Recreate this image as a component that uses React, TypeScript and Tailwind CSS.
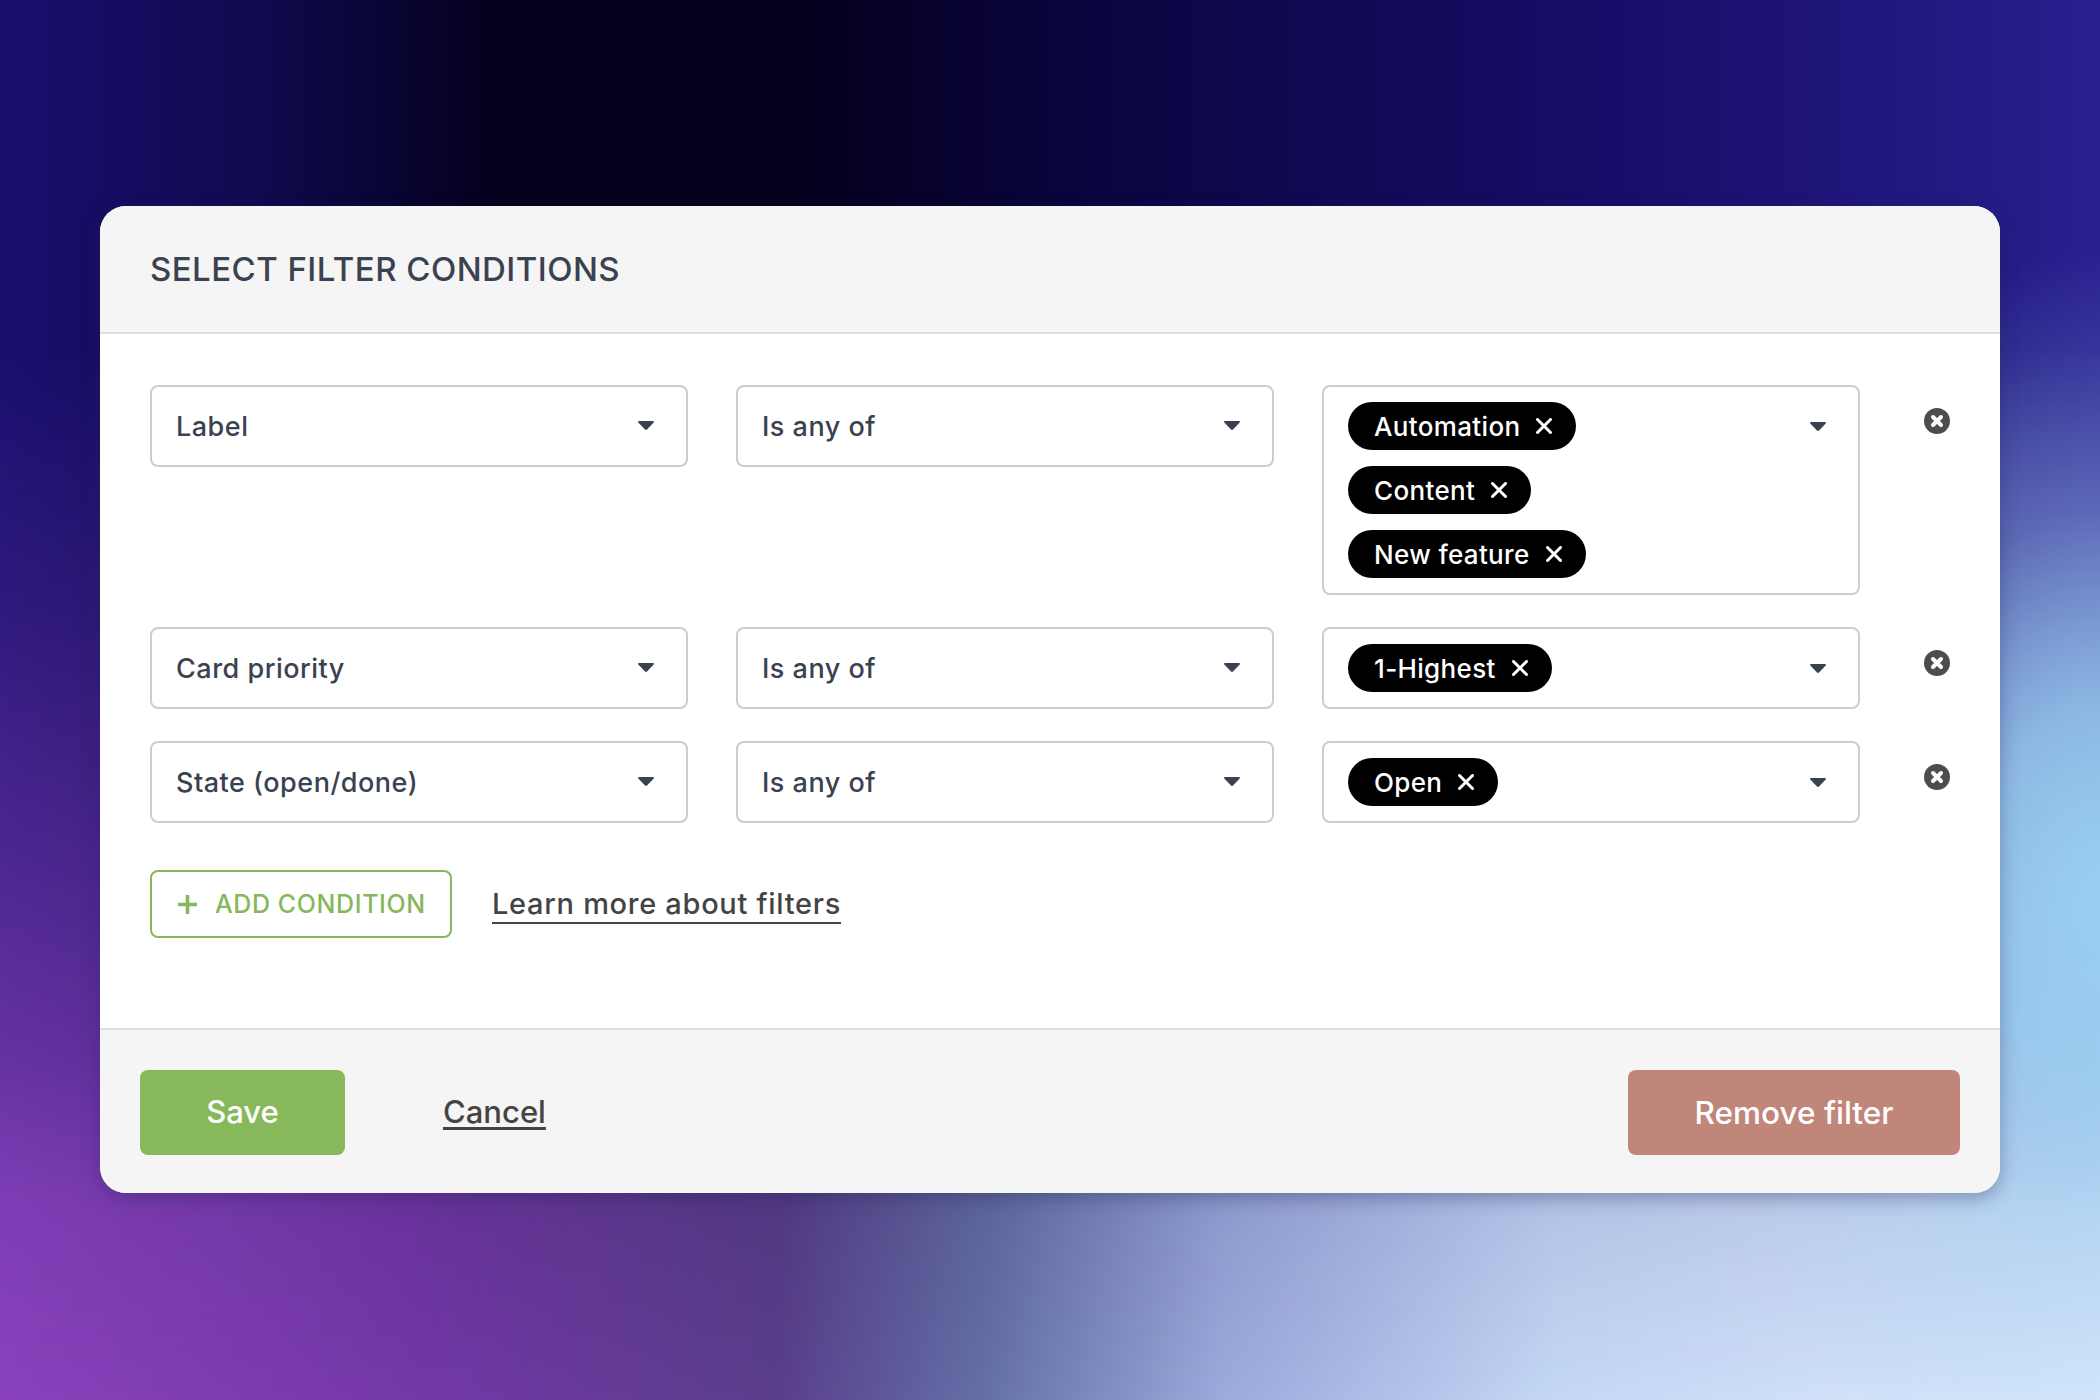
const fontBody = 'font-["Inter","Liberation_Sans",sans-serif]';

function Caret() {
  return (
    <svg width="18" height="11" viewBox="0 0 18 11" className="shrink-0">
      <path d="M2 1h14c.9 0 1.3 1 .7 1.6L10 9.6c-.6.5-1.4.5-2 0L1.3 2.6C.7 2 1.1 1 2 1z" fill="#3a4250" />
    </svg>
  );
}

function RemoveIcon() {
  return (
    <svg width="26" height="26" viewBox="0 0 26 26">
      <circle cx="13" cy="13" r="13" fill="#4d4d4d" />
      <path d="M9 9l8 8M17 9l-8 8" stroke="#fff" strokeWidth="4" strokeLinecap="round" />
    </svg>
  );
}

function Tag({ label }: { label: string }) {
  return (
    <span className="inline-flex h-12 items-center gap-4 self-start rounded-full bg-black pl-[26px] pr-6 text-[26px] font-medium tracking-[0.35px] text-white">
      {label}
      <svg width="16" height="16" viewBox="0 0 16 16">
        <path d="M1.5 1.5l13 13M14.5 1.5l-13 13" stroke="#fff" strokeWidth="3" strokeLinecap="round" />
      </svg>
    </span>
  );
}

function Select({ label }: { label: string }) {
  return (
    <div className="flex h-[82px] w-[538px] items-center justify-between rounded-lg border-2 border-[#cdcdcd] pl-6 pr-[31px] text-[27px] font-medium tracking-[0.5px] text-[#3a4250]">
      <span className="pt-[2px]">{label}</span>
      <span className="-mt-[2px]">
        <Caret />
      </span>
    </div>
  );
}

function TagSelect({ tags }: { tags: string[] }) {
  return (
    <div className="flex min-h-[82px] w-[538px] items-start justify-between rounded-lg border-2 border-[#cdcdcd] py-[15px] pl-6 pr-[31px]">
      <div className="flex flex-col gap-4">
        {tags.map((t) => (
          <Tag key={t} label={t} />
        ))}
      </div>
      <span className="mt-[19px]">
        <Caret />
      </span>
    </div>
  );
}

function Row({ field, tags }: { field: string; tags: string[] }) {
  return (
    <div className="flex items-start gap-12">
      <Select label={field} />
      <Select label="Is any of" />
      <TagSelect tags={tags} />
      <div className="ml-4 mt-[23px]">
        <RemoveIcon />
      </div>
    </div>
  );
}

export default function App() {
  return (
    <div
      className={`relative flex h-[1400px] w-[2100px] items-start justify-center pt-[206px] ${fontBody} bg-[linear-gradient(90deg,#8a43bd_0%,#7438a8_20%,#5a3f8c_37%,#6571a8_47%,#9ba9dc_58%,#c4d8f5_74%,#dce9fb_100%)] before:absolute before:inset-0 before:bg-[linear-gradient(90deg,#180f6e_0%,#100a50_12%,#03001c_24%,#03001c_38%,#0b0540_52%,#170d68_76%,#241b85_95%,#2a2090_100%)] before:content-[''] before:[mask-image:linear-gradient(180deg,#000_25%,rgba(0,0,0,0.8)_43%,rgba(0,0,0,0.6)_57%,rgba(0,0,0,0.33)_75%,rgba(0,0,0,0.1)_86%,transparent_100%)] after:absolute after:inset-0 after:bg-[radial-gradient(ellipse_400px_650px_at_2100px_900px,rgba(154,212,244,0.95)_0%,rgba(154,212,244,0.75)_30%,rgba(154,212,244,0.3)_60%,transparent_100%)] after:content-['']`}
    >
      <div className="relative z-10 flex h-[987px] w-[1900px] flex-col overflow-hidden rounded-[26px] bg-white shadow-[0_6px_18px_rgba(40,40,90,0.35)]">
        <div className="flex h-[128px] items-center border-b-2 border-[#dedede] bg-[#f5f5f5] px-[50px]">
          <h1 className="text-[33px] font-medium leading-none tracking-[0.45px] text-[#3a4250]">SELECT FILTER CONDITIONS</h1>
        </div>
        <div className="flex flex-1 flex-col gap-8 px-[50px] pt-[51px]">
          <Row field="Label" tags={['Automation', 'Content', 'New feature']} />
          <Row field="Card priority" tags={['1-Highest']} />
          <Row field="State (open/done)" tags={['Open']} />
          <div className="mt-[15px] flex items-center gap-10">
            <button className="flex h-[68px] w-[302px] items-center gap-[18px] rounded-lg border-2 border-[#85b85a] pl-[26px] text-[25px] font-medium tracking-[0.6px] text-[#85b85a]">
              <svg width="19" height="19" viewBox="0 0 19 19" className="shrink-0">
                <path d="M9.5 1v17M1 9.5h17" stroke="#85b85a" strokeWidth="3.6" strokeLinecap="round" />
              </svg>
              <span className="pt-[2px]">ADD CONDITION</span>
            </button>
            <a className="mt-[2px] border-b-2 border-[#444] text-[29px] font-medium leading-[36px] tracking-[0.7px] text-[#444]">Learn more about filters</a>
          </div>
        </div>
        <div className="flex h-[165px] items-start justify-between border-t-2 border-[#dedede] bg-[#f5f5f5] px-10 pt-10">
          <div className="flex items-center gap-[98px]">
            <button className="h-[85px] w-[205px] rounded-lg bg-[#87b85b] text-[31px] font-medium text-white">Save</button>
            <a className="text-[31px] font-medium text-[#444] underline underline-offset-4">Cancel</a>
          </div>
          <button className="h-[85px] w-[332px] rounded-lg bg-[#c1867a] text-[31.5px] font-medium text-white">Remove filter</button>
        </div>
      </div>
    </div>
  );
}
